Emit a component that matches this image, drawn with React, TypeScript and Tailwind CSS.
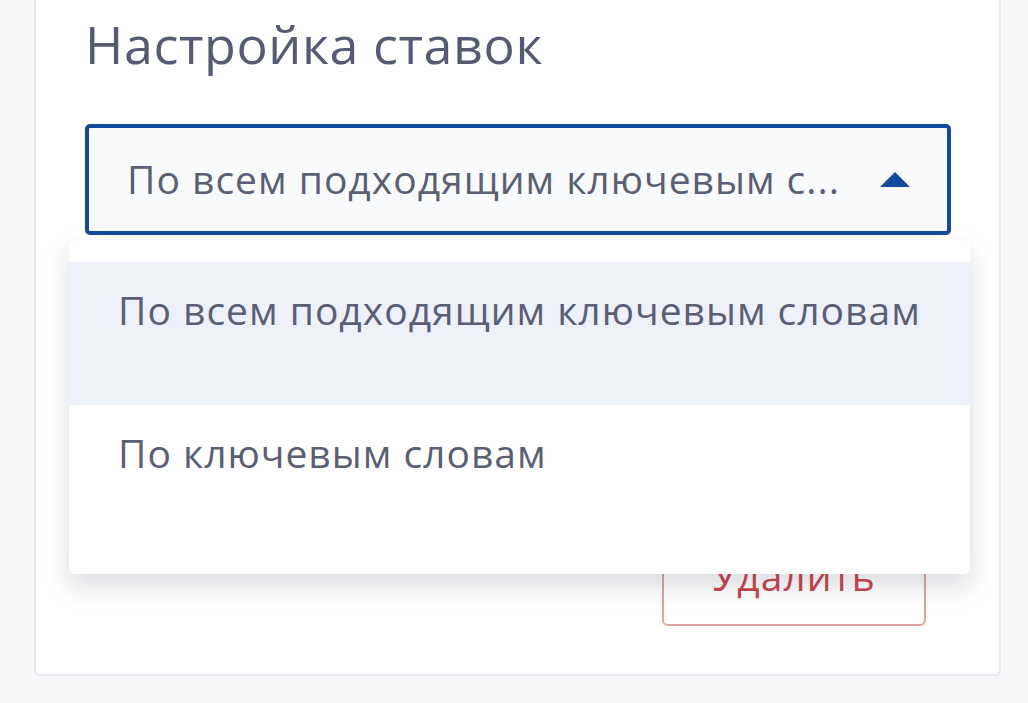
import React from "react";

export default function App() {
  return (
    <div className="min-h-[703px] w-[1028px] bg-[#f8f8fb] pl-[34px] pr-[27px] overflow-hidden" style={{ fontFamily: '"Open Sans", "Noto Sans", sans-serif' }}>
      <div className="bg-white border-x-2 border-b-2 border-[#e6e6ef] rounded-b-md pl-[49px] pr-[48px] pb-[48px]">
        <h1 className="pt-[11px] text-[52px] leading-[66px] text-[#565b73] tracking-[0.6px]">Настройка ставок</h1>
        <div className="relative mt-[47px]">
          <div className="h-[111px] border-[4px] border-[#134a9c] rounded-[5px] bg-[#f9fafc] flex items-center justify-between pl-[38px] pr-[37px]">
            <span className="text-[39px] text-[#5a5f74] tracking-[1px] whitespace-nowrap">По всем подходящим ключевым с...</span>
            <svg width="30" height="15" viewBox="0 0 30 15" className="shrink-0">
              <path d="M15 0 L30 15 L0 15 Z" fill="#134a9c" />
            </svg>
          </div>
          <div className="absolute z-10 top-[116px] left-[-16px] right-[-19px] h-[334px] bg-white rounded-md shadow-[0_12px_26px_rgba(30,35,60,0.16)] pt-[22px]">
            <div className="h-[143px] bg-[#edf1f9] pl-[49px] pt-[22px]">
              <span className="text-[39px] leading-[52px] text-[#5a5f74] tracking-[1px] whitespace-nowrap">По всем подходящим ключевым словам</span>
            </div>
            <div className="h-[143px] pl-[49px] pt-[22px]">
              <span className="text-[39px] leading-[52px] text-[#5a5f74] tracking-[1px] whitespace-nowrap">По ключевым словам</span>
            </div>
          </div>
        </div>
        <div className="flex justify-end mt-[291px] pr-[25px]">
          <button className="w-[264px] h-[100px] border-2 border-[#e3a2a4] rounded-md text-[39px] text-[#c9474b] tracking-[1px] flex items-center justify-center">
            Удалить
          </button>
        </div>
      </div>
    </div>
  );
}
